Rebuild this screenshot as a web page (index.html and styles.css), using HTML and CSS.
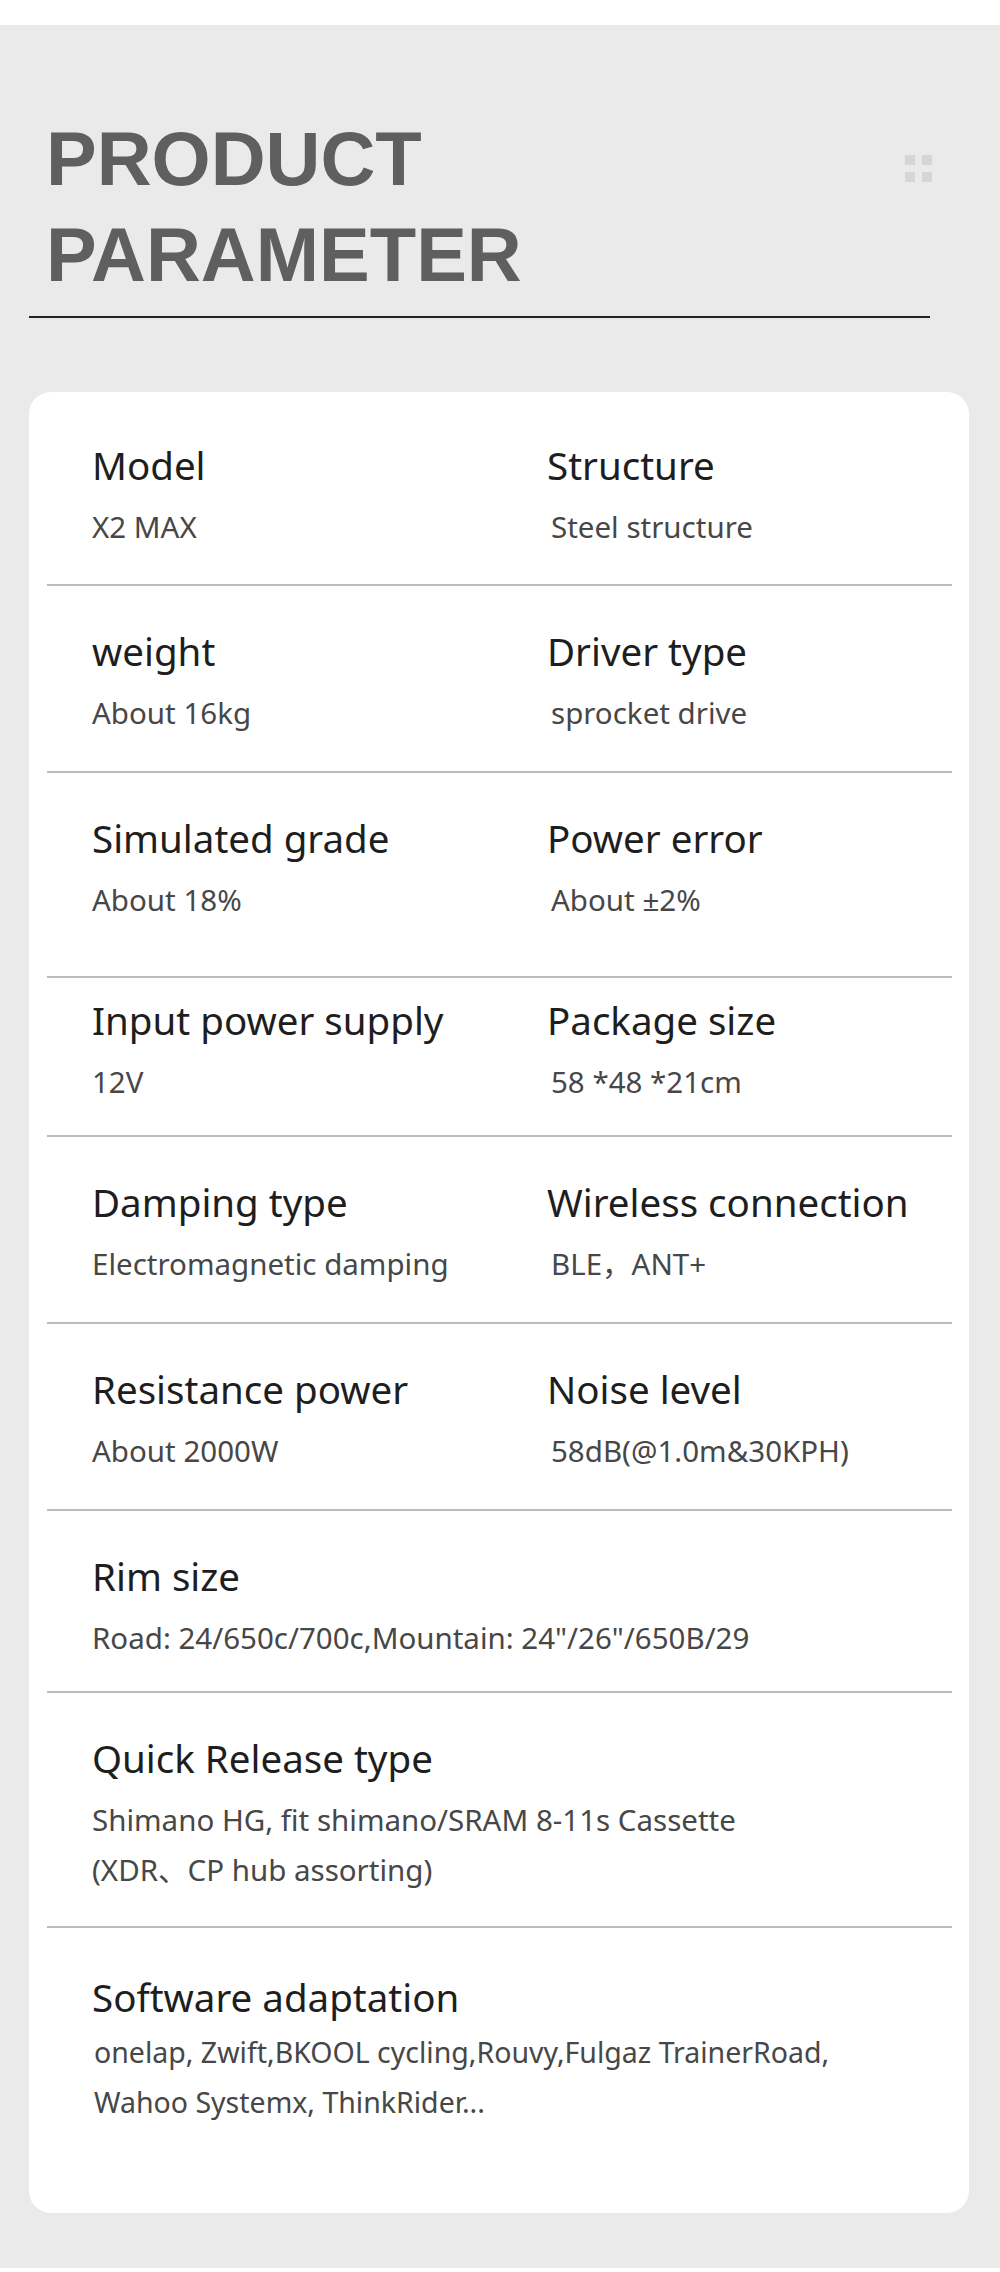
FILE: index.html
```html
<!DOCTYPE html>
<html lang="en">
<head>
  <meta charset="UTF-8" />
  <meta name="viewport" content="width=device-width, initial-scale=1.0"/>
  <title>Product Parameter</title>
  <link rel="stylesheet" href="styles.css">
</head>
<body>
  <div class="page">
    <header class="head">
      <h1 class="title">PRODUCT<br>PARAMETER</h1>
      <div class="dots"><span></span><span></span><span></span><span></span></div>
    </header>
    <div class="rule"></div>

    <section class="card">
      <div class="row">
        <div class="spec"><div class="label">Model</div><div class="value">X2 MAX</div></div>
        <div class="spec right"><div class="label">Structure</div><div class="value">Steel structure</div></div>
      </div>
      <div class="row">
        <div class="spec"><div class="label">weight</div><div class="value">About 16kg</div></div>
        <div class="spec right"><div class="label">Driver type</div><div class="value">sprocket drive</div></div>
      </div>
      <div class="row row-tall">
        <div class="spec"><div class="label">Simulated grade</div><div class="value">About 18%</div></div>
        <div class="spec right"><div class="label">Power error</div><div class="value">About ±2%</div></div>
      </div>
      <div class="row row-tight">
        <div class="spec"><div class="label">Input power supply</div><div class="value">12V</div></div>
        <div class="spec right"><div class="label">Package size</div><div class="value">58 *48 *21cm</div></div>
      </div>
      <div class="row">
        <div class="spec"><div class="label">Damping type</div><div class="value">Electromagnetic damping</div></div>
        <div class="spec right"><div class="label">Wireless connection</div><div class="value">BLE，ANT+</div></div>
      </div>
      <div class="row">
        <div class="spec"><div class="label">Resistance power</div><div class="value">About 2000W</div></div>
        <div class="spec right"><div class="label">Noise level</div><div class="value">58dB(@1.0m&amp;30KPH)</div></div>
      </div>
      <div class="row row-short">
        <div class="spec wide"><div class="label">Rim size</div><div class="value">Road: 24/650c/700c,Mountain: 24"/26"/650B/29</div></div>
      </div>
      <div class="row row-wrap">
        <div class="spec wide"><div class="label">Quick Release type</div><div class="value">Shimano HG, fit shimano/SRAM 8-11s Cassette<br>(XDR、CP hub assorting)</div></div>
      </div>
      <div class="row row-last">
        <div class="spec wide"><div class="label">Software adaptation</div><div class="value small">onelap, Zwift,BKOOL cycling,Rouvy,Fulgaz TrainerRoad,<br>Wahoo Systemx, ThinkRider...</div></div>
      </div>
    </section>
  </div>
</body>
</html>
```

FILE: styles.css
```css
body {
  margin: 0;
  background: #fff;
  font-family: "Noto Sans", "Noto Sans CJK SC", sans-serif;
}
.page {
  margin: 25px 0 4px;
  background: #eaeaea;
  padding: 86px 31px 55px 29px;
}
.head {
  display: flex;
  justify-content: space-between;
  align-items: flex-start;
  padding: 0 37px 0 17px;
}
.title {
  margin: 0;
  font: bold 76px/96px "Liberation Sans", Arial, sans-serif;
  color: #5f5f5f;
}
.dots {
  margin-top: 44px;
  display: grid;
  grid-template-columns: 10px 10px;
  gap: 7px;
}
.dots span {
  width: 10px;
  height: 10px;
  background: #d6d6d6;
}
.rule {
  width: 901px;
  height: 2px;
  background: #222;
  margin-top: 13px;
}
.card {
  margin-top: 74px;
  background: #fff;
  border-radius: 22px;
  padding: 8px 17px 0 18px;
}
.row {
  display: grid;
  grid-template-columns: 455px 1fr;
  padding: 42px 0 33px 45px;
  border-bottom: 2px solid #bcbcbc;
}
.row:first-child {
  padding-bottom: 32px;
}
.row-tall {
  padding-bottom: 51px;
}
.row-tight {
  padding-top: 19px;
  padding-bottom: 28px;
}
.row-short {
  padding-bottom: 28px;
}
.row-wrap {
  padding-bottom: 31px;
}
.row-last {
  border-bottom: none;
  padding-top: 46px;
  padding-bottom: 86px;
}
.spec.wide {
  grid-column: 1 / -1;
}
.label {
  font-size: 38.5px;
  line-height: 46px;
  color: #1e1e1e;
}
.value {
  margin-top: 14px;
  font-size: 29.5px;
  line-height: 50px;
  color: #474747;
}
.right .value {
  padding-left: 4px;
}
.value.small {
  margin-top: 7px;
  padding-left: 2px;
  font-size: 28.5px;
}
```
